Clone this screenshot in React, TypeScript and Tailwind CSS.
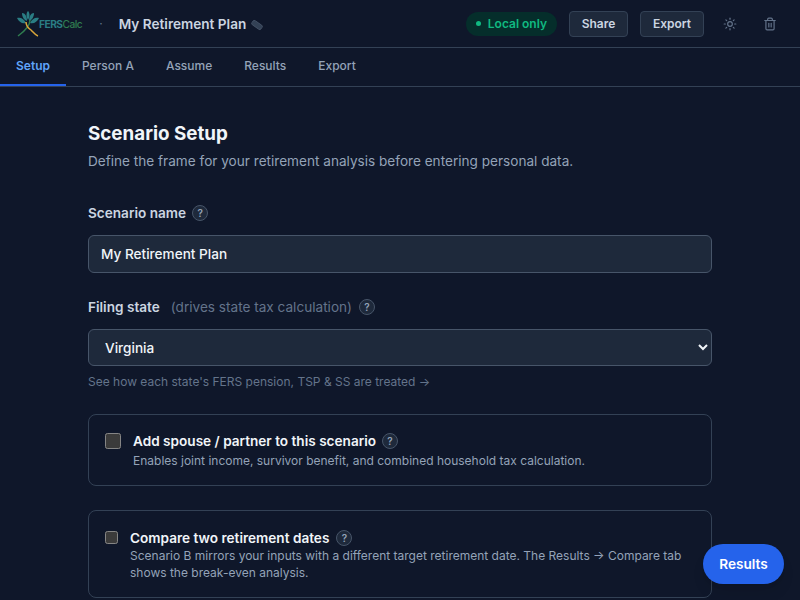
import { Sun, Trash2 } from "lucide-react";

const tabs = ["Setup", "Person A", "Assume", "Results", "Export"];

const Help = () => (
  <span className="inline-flex h-4 w-4 items-center justify-center rounded-full border border-[#475569] bg-[#1e293b] text-[10px] font-semibold leading-none text-[#94a3b8]">
    ?
  </span>
);

const Logo = () => (
  <div className="flex items-center">
    <svg width="24" height="28" viewBox="0 0 24 28" fill="none">
      <g fill="#2a7d84">
        <path d="M12 1c2 2 2 6 0 9-2-3-2-7 0-9z" />
        <path d="M6 3c3 0 5 3 5 8-3-1-5-4-5-8z" />
        <path d="M18 3c-3 0-5 3-5 8 3-1 5-4 5-8z" />
        <path d="M1 8c4-1 7 1 9 5-4 1-7-1-9-5z" />
        <path d="M23 8c-4-1-7 1-9 5 4 1 7-1 9-5z" />
      </g>
      <path d="M14 10c0 6-5 11-12 16" stroke="#2f7d4f" strokeWidth="1.5" />
      <path d="M10 12c0 4 2 6 5 8 2 2 4 5 7 6" stroke="#d9a63a" strokeWidth="1.5" />
    </svg>
    <span className="-ml-[1px] mt-[3px] text-[10.2px] font-bold tracking-[-0.5px] text-[#2a7d84]">
      FERS<span className="font-medium text-[#2f7d4f]">Calc</span>
    </span>
  </div>
);

const PencilMark = () => (
  <svg width="12" height="12" viewBox="0 0 12 12" className="ml-[5px] mt-[2px]">
    <rect x="0.5" y="3.5" width="11" height="5" rx="1.5" transform="rotate(35 6 6)" fill="#334155" stroke="#475569" strokeWidth="0.8" />
  </svg>
);

export default function App() {
  return (
    <div className="relative h-screen overflow-hidden bg-[#0f172a] font-['Inter',sans-serif] text-[#f1f5f9] [color-scheme:dark]">
      <header className="flex h-[48px] items-center border-b border-[#334155] bg-[#0f172a] pl-4 pr-[23px]">
        <Logo />
        <span className="ml-[17px] text-xs text-[#64748b]">·</span>
        <span className="ml-[16px] mt-[1px] text-[13.6px] font-semibold text-[#cbd5e1]">My Retirement Plan</span>
        <PencilMark />
        <div className="ml-auto flex items-center">
          <span className="flex h-6 items-center gap-[7px] rounded-full bg-[#052e2b] px-[10px] text-xs font-semibold text-[#10b981]">
            <span className="h-[5px] w-[5px] rounded-full bg-[#10b981]" />
            Local only
          </span>
          <button className="ml-3 h-[26px] w-[59px] rounded border border-[#334155] bg-[#1e293b] text-xs font-semibold text-[#cbd5e1]">
            Share
          </button>
          <button className="ml-3 h-[26px] w-[64px] rounded border border-[#334155] bg-[#1e293b] text-xs font-semibold text-[#cbd5e1]">
            Export
          </button>
          <Sun size={14} className="ml-[19px] text-[#64748b]" />
          <Trash2 size={14} className="ml-[26px] text-[#64748b]" />
        </div>
      </header>

      <nav className="flex h-[39px] border-b border-[#334155]">
        {tabs.map((t, i) => (
          <button
            key={t}
            className={`-mb-px h-[38px] border-b-2 px-4 text-xs ${
              i === 0 ? "border-[#2563eb] font-semibold text-[#60a5fa]" : "border-transparent font-medium text-[#94a3b8]"
            }`}
          >
            {t}
          </button>
        ))}
      </nav>

      <main className="mx-auto w-[624px] pt-[34px]">
        <h1 className="text-[18.8px] font-bold leading-[26px] text-[#f1f5f9]">Scenario Setup</h1>
        <p className="mt-[4px] text-[13.6px] leading-5 text-[#94a3b8]">
          Define the frame for your retirement analysis before entering personal data.
        </p>

        <label className="mt-[32px] flex h-5 items-center gap-[6px] text-[13.6px] font-semibold text-[#cbd5e1]">
          Scenario name <Help />
        </label>
        <input
          readOnly
          value="My Retirement Plan"
          className="mt-[12px] block h-[38px] w-full rounded-md border border-[#475569] bg-[#1e293b] px-3 text-[13.6px] font-medium text-[#f1f5f9] outline-none"
        />

        <label className="mt-[24px] flex h-5 items-center text-[13.6px] font-semibold text-[#cbd5e1]">
          Filing state
          <span className="ml-[11px] font-normal text-[#64748b]">(drives state tax calculation)</span>
          <span className="ml-[7px] flex">
            <Help />
          </span>
        </label>
        <select
          defaultValue="Virginia"
          className="mt-[12px] block h-[37px] w-full rounded-md border border-[#475569] bg-[#1e293b] px-3 text-[13.6px] font-medium text-[#f1f5f9] outline-none"
        >
          <option>Virginia</option>
        </select>
        <p className="mt-[8px] text-xs leading-4 text-[#64748b]">
          See how each state's FERS pension, TSP &amp; SS are treated →
        </p>

        <div className="mt-[24px] flex h-[72px] items-start rounded-lg border border-[#334155] pl-4 pt-[18px]">
          <input type="checkbox" className="h-4 w-4 shrink-0 accent-[#2563eb]" />
          <div className="ml-3 -mt-[2px]">
            <div className="flex h-5 items-center gap-[6px] text-[13.6px] font-semibold text-[#f1f5f9]">
              Add spouse / partner to this scenario <Help />
            </div>
            <p className="mt-[1px] text-xs leading-[18px] text-[#94a3b8]">
              Enables joint income, survivor benefit, and combined household tax calculation.
            </p>
          </div>
        </div>

        <div className="mt-[24px] flex h-[88px] items-start rounded-lg border border-[#334155] pl-4 pr-[24px] pt-[20px]">
          <input type="checkbox" className="h-[13px] w-[13px] shrink-0 accent-[#2563eb]" />
          <div className="ml-3 -mt-[3px]">
            <div className="flex h-5 items-center gap-[7px] text-[13.6px] font-semibold text-[#f1f5f9]">
              Compare two retirement dates <Help />
            </div>
            <p className="-mt-px text-xs leading-[17px] text-[#94a3b8]">
              Scenario B mirrors your inputs with a different target retirement date. The Results → Compare tab
              shows the break-even analysis.
            </p>
          </div>
        </div>
      </main>

      <button className="absolute bottom-4 right-4 h-10 w-[81px] rounded-full bg-[#2563eb] text-[13.6px] font-semibold text-white shadow-lg">
        Results
      </button>
    </div>
  );
}
